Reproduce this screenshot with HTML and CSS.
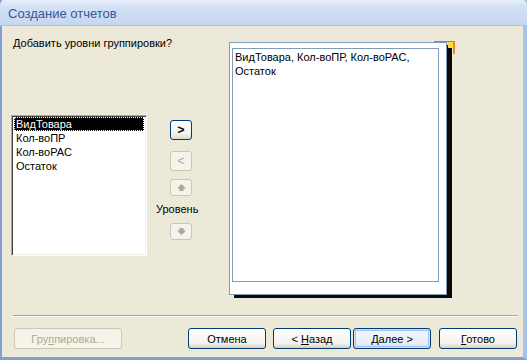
FILE: index.html
```html
<!DOCTYPE html>
<html lang="ru">
<head>
    <meta charset="UTF-8">
    <title>Создание отчетов</title>
    <link rel="stylesheet" href="styles.css">
</head>
<body>
    <div class="window">
        <div class="titlebar">Создание отчетов</div>

        <div class="content">
            <div class="main">
                <div class="left-col">
                    <div class="prompt">Добавить уровни группировки?</div>
                    <div class="listbox">
                        <div class="list-item selected">ВидТовара</div>
                        <div class="list-item">Кол-воПР</div>
                        <div class="list-item">Кол-воРАС</div>
                        <div class="list-item">Остаток</div>
                    </div>
                </div>

                <div class="mid-col">
                    <button class="small-btn btn-add">&gt;</button>
                    <button class="small-btn btn-remove" disabled>&lt;</button>
                    <button class="small-btn short" disabled>
                        <svg width="9" height="7" viewBox="0 0 9 7"><polygon points="4.5,0 9,4.5 6.5,4.5 6.5,7 2.5,7 2.5,4.5 0,4.5" fill="#aca899"/></svg>
                    </button>
                    <div class="level-label">Уровень</div>
                    <button class="small-btn short" disabled>
                        <svg width="9" height="7" viewBox="0 0 9 7"><polygon points="4.5,7 9,2.5 6.5,2.5 6.5,0 2.5,0 2.5,2.5 0,2.5" fill="#aca899"/></svg>
                    </button>
                </div>

                <div class="preview">
                    <div class="preview-corner"></div>
                    <div class="preview-inner">ВидТовара, Кол-воПР, Кол-воРАС, Остаток</div>
                </div>
            </div>

            <div class="separator"></div>

            <div class="footer">
                <button class="btn wide" disabled>Гру<u>п</u>пировка...</button>
                <div class="footer-right">
                    <button class="btn">Отмена</button>
                    <button class="btn btn-back">&lt; <u>Н</u>азад</button>
                    <button class="btn btn-default"><u>Д</u>алее &gt;</button>
                    <button class="btn btn-done"><u>Г</u>отово</button>
                </div>
            </div>
        </div>
    </div>
</body>
</html>
```

FILE: styles.css
```css
body {
    margin: 0;
    padding: 0;
    font-family: "Liberation Sans", Arial, sans-serif;
    font-size: 11px;
    color: #000;
}

.window {
    width: 527px;
    height: 360px;
    box-sizing: border-box;
    display: flex;
    flex-direction: column;
    border-left: 2px solid #7f9fd6;
    border-right: 4px solid #a9c3e8;
    border-bottom: 3px solid #7f9fd6;
    background-color: #ece9d8;
}

.titlebar {
    height: 26px;
    margin-left: -2px;
    margin-right: -4px;
    padding-left: 8px;
    box-sizing: border-box;
    line-height: 27px;
    font-size: 13px;
    color: #3a5596;
    background: linear-gradient(#e7eefa, #d3e0f5 30%, #c6d7f1);
    border-bottom: 1px solid #a6c3ec;
    border-top-left-radius: 5px;
    border-top-right-radius: 5px;
}

.content {
    flex: 1;
    display: flex;
    flex-direction: column;
}

.main {
    display: flex;
    align-items: flex-start;
}

.left-col {
    width: 136px;
    margin-left: 9px;
}

.prompt {
    margin-top: 11px;
    margin-left: 2px;
    line-height: 13px;
    white-space: nowrap;
}

.listbox {
    margin-top: 65px;
    height: 141px;
    box-sizing: border-box;
    background-color: #fff;
    border-top: 1px solid #aca899;
    border-left: 1px solid #aca899;
    border-right: 1px solid #fff;
    border-bottom: 1px solid #fff;
    box-shadow: inset 1px 1px 0 #404040, inset -1px -1px 0 #f1efe2;
    padding: 1px 2px;
}

.list-item {
    height: 14px;
    line-height: 14px;
    padding-left: 2px;
}

.list-item.selected {
    background-color: #000;
    color: #fff;
    outline: 1px dotted #fff;
    outline-offset: -1px;
}

.mid-col {
    width: 82px;
    display: flex;
    flex-direction: column;
    align-items: flex-start;
    padding-top: 94px;
}

.small-btn {
    width: 22px;
    height: 20px;
    margin-left: 23px;
    padding: 0;
    border: 1px solid #003c74;
    border-radius: 3px;
    background: linear-gradient(#ffffff, #f4f3ee 70%, #dcd9cd);
    font-family: "Liberation Sans", Arial, sans-serif;
    font-size: 12px;
    font-weight: bold;
    color: #000;
    display: flex;
    align-items: center;
    justify-content: center;
}

.small-btn:disabled {
    border-color: #c9c7ba;
    background: #f5f4ea;
    color: #aca899;
    font-weight: normal;
}

.btn-remove {
    margin-top: 11px;
}

.small-btn.short {
    height: 17px;
    margin-top: 8px;
}

.level-label {
    margin-left: 9px;
    margin-top: 6px;
    line-height: 14px;
}

.small-btn.short + .level-label + .small-btn.short {
    margin-top: 7px;
}

.preview {
    position: relative;
    width: 218px;
    height: 253px;
    box-sizing: border-box;
    margin-top: 16px;
    background-color: #fff;
    border: 1px solid #7f9db9;
    box-shadow: 5px 3px 0 #0b0b0b;
    padding: 5px 7px 12px 2px;
}

.preview-corner {
    position: absolute;
    top: -2px;
    right: -9px;
    width: 19px;
    height: 12px;
    border-top: 1px solid #f0641e;
    border-right: 2px solid #f08c1e;
    background: linear-gradient(#ffd84a, #ffd84a) no-repeat right top / 5px 6px;
}

.preview-inner {
    height: 100%;
    box-sizing: border-box;
    border: 1px solid #7f9db9;
    padding: 1px 2px;
    line-height: 14px;
}

.separator {
    margin: 20px 5px 0 11px;
    border-top: 1px solid #aca899;
    border-bottom: 1px solid #fff;
}

.footer {
    display: flex;
    justify-content: space-between;
    margin-top: 11px;
    padding: 0 6px 0 12px;
}

.footer-right {
    display: flex;
}

.btn {
    width: 78px;
    height: 21px;
    padding: 0;
    border: 1px solid #003c74;
    border-radius: 3px;
    background: linear-gradient(#ffffff, #f4f3ee 75%, #d6d0c5);
    font-family: "Liberation Sans", Arial, sans-serif;
    font-size: 11px;
    color: #000;
}

.btn.wide {
    width: 108px;
}

.btn:disabled {
    border-color: #c9c7ba;
    background: #f5f4ea;
    color: #aca899;
}

.btn-back {
    margin-left: 7px;
}

.btn-default {
    margin-left: 2px;
    box-shadow: inset 0 0 0 1px #cee0f8, inset 0 0 0 2px #a6c3ef;
    background: linear-gradient(#f3f7fd, #e7eefa 75%, #d3dcec);
}

.btn-done {
    margin-left: 8px;
}
```
